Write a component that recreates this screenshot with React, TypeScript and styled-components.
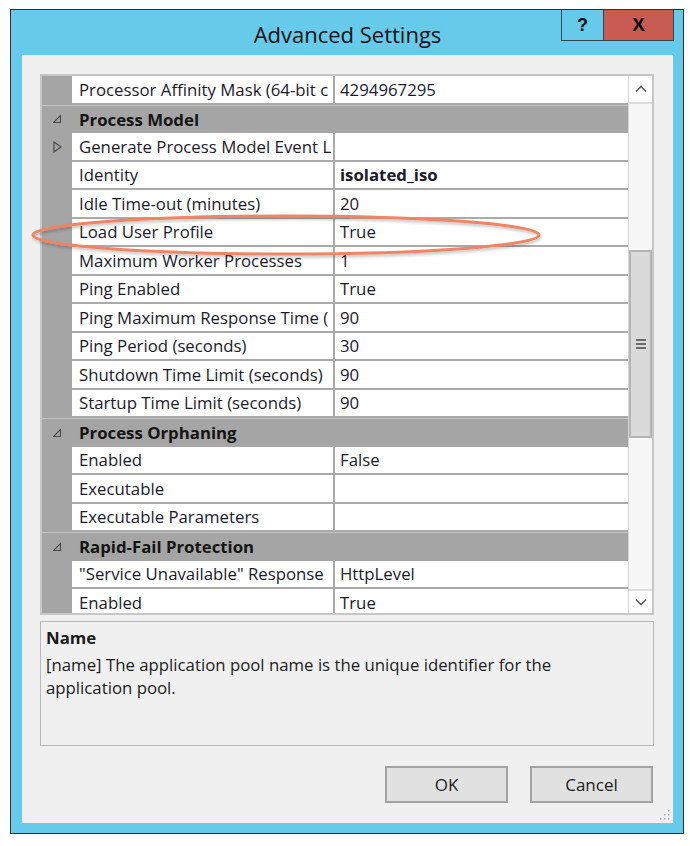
import styled, { createGlobalStyle } from 'styled-components';

const GlobalStyle = createGlobalStyle`
  html, body {
    margin: 0;
    padding: 0;
    background: #ffffff;
  }
  * {
    box-sizing: border-box;
  }
`;

const UI_FONT = `'Open Sans', 'Noto Sans', 'Liberation Sans', sans-serif`;

type PropRow = {
  kind: 'prop';
  name: string;
  value: string;
  bold?: boolean;
  expandable?: boolean;
};
type GroupRow = { kind: 'group'; name: string };
type Row = PropRow | GroupRow;

// names are cut where the grid column cuts them in the dialog
const rows: Row[] = [
  { kind: 'prop', name: 'Processor Affinity Mask (64-bit c', value: '4294967295' },
  { kind: 'group', name: 'Process Model' },
  { kind: 'prop', name: 'Generate Process Model Event L', value: '', expandable: true },
  { kind: 'prop', name: 'Identity', value: 'isolated_iso', bold: true },
  { kind: 'prop', name: 'Idle Time-out (minutes)', value: '20' },
  { kind: 'prop', name: 'Load User Profile', value: 'True' },
  { kind: 'prop', name: 'Maximum Worker Processes', value: '1' },
  { kind: 'prop', name: 'Ping Enabled', value: 'True' },
  { kind: 'prop', name: 'Ping Maximum Response Time (', value: '90' },
  { kind: 'prop', name: 'Ping Period (seconds)', value: '30' },
  { kind: 'prop', name: 'Shutdown Time Limit (seconds)', value: '90' },
  { kind: 'prop', name: 'Startup Time Limit (seconds)', value: '90' },
  { kind: 'group', name: 'Process Orphaning' },
  { kind: 'prop', name: 'Enabled', value: 'False' },
  { kind: 'prop', name: 'Executable', value: '' },
  { kind: 'prop', name: 'Executable Parameters', value: '' },
  { kind: 'group', name: 'Rapid-Fail Protection' },
  { kind: 'prop', name: '"Service Unavailable" Response ', value: 'HttpLevel' },
  { kind: 'prop', name: 'Enabled', value: 'True' },
];

const Window = styled.div`
  position: relative;
  margin: 9px 0 0 10px;
  width: 674px;
  height: 825px;
  border: 1px solid #2e2e2e;
  background: #66cbea;
  padding: 0 10px 10px 11px;
  display: flex;
  flex-direction: column;
  font-family: ${UI_FONT};
  color: #1b1b1b;
`;

const TitleBar = styled.div`
  height: 45px;
  display: grid;
  grid-template-columns: 1fr auto 1fr;
  align-items: start;
`;

const Title = styled.div`
  grid-column: 2;
  padding-top: 10px;
  font-size: 22px;
  line-height: 28px;
  color: #111;
`;

const CaptionButtons = styled.div`
  grid-column: 3;
  justify-self: end;
  margin-right: -1px;
  display: flex;
  border: 1px solid #34464e;
  border-top: none;
`;

const CaptionButton = styled.div<{ $close?: boolean }>`
  width: ${p => (p.$close ? '70px' : '41px')};
  height: 30px;
  display: flex;
  align-items: center;
  justify-content: center;
  background: ${p => (p.$close ? '#c75b52' : 'transparent')};
  border-left: ${p => (p.$close ? '1px solid #34464e' : 'none')};
  font-family: 'Liberation Sans', Arial, sans-serif;
  font-weight: 700;
  font-size: ${p => (p.$close ? '19px' : '18px')};
  color: #0a0a0a;
`;

const Client = styled.div`
  position: relative;
  flex: 1;
  background: #f0f0f0;
  padding: 19px 19px 20px 18px;
  display: flex;
  flex-direction: column;
`;

const Grid = styled.div`
  height: 541px;
  border: 2px solid #c6c6c6;
  display: flex;
  background: #ffffff;
  overflow: hidden;
`;

const Table = styled.div`
  flex: 1;
  display: flex;
  flex-direction: column;
  overflow: hidden;
  font-size: 16.8px;
`;

const RowBox = styled.div<{ $group?: boolean }>`
  flex: 0 0 28.5px;
  height: 28.5px;
  display: grid;
  grid-template-columns: 30px 263px 1fr;
  background: ${p => (p.$group ? '#a5a5a5' : '#ffffff')};
  border-top: ${p => (p.$group ? '1px solid #c2c2c2' : 'none')};
`;

const Gutter = styled.div`
  background: #a5a5a5;
  display: flex;
  align-items: center;
  justify-content: center;
  padding-left: 1px;
`;

const Cell = styled.div<{ $name?: boolean; $bold?: boolean }>`
  display: flex;
  align-items: center;
  white-space: nowrap;
  overflow: hidden;
  padding-left: ${p => (p.$name ? '7px' : '5px')};
  border-bottom: 2px solid #a9a9a9;
  border-right: ${p => (p.$name ? '2px solid #a9a9a9' : 'none')};
  font-weight: ${p => (p.$bold ? 700 : 400)};
  color: #1c1a2a;
`;

const GroupLabel = styled.div`
  grid-column: 2 / 4;
  display: flex;
  align-items: center;
  padding-left: 7px;
  font-weight: 700;
  color: #141414;
`;

const ScrollBar = styled.div`
  width: 24px;
  display: flex;
  flex-direction: column;
  background: #f7f7f7;
  border-left: 1px solid #d6d6d6;
`;

const ArrowButton = styled.div<{ $h: number; $down?: boolean }>`
  height: ${p => p.$h}px;
  flex: 0 0 ${p => p.$h}px;
  background: #ffffff;
  display: flex;
  align-items: center;
  justify-content: center;
  border-bottom: ${p => (p.$down ? 'none' : '2px solid #dcdcdc')};
  border-top: ${p => (p.$down ? '2px solid #dcdcdc' : 'none')};
`;

const Track = styled.div`
  flex: 1;
  padding-top: 146px;
`;

const Thumb = styled.div`
  height: 188px;
  background: #dadada;
  border: 2px solid #b4b4b4;
  display: flex;
  flex-direction: column;
  align-items: center;
  justify-content: center;
  gap: 2px;
`;

const GripLine = styled.div`
  width: 10px;
  height: 2px;
  background: #6a6a6a;
`;

const Description = styled.div`
  margin-top: 6px;
  height: 125px;
  border: 1px solid #b8b8b8;
  padding: 4px 40px 0 5px;
  font-size: 16.8px;
  line-height: 23px;
`;

const DescTitle = styled.div`
  font-weight: 700;
  margin-bottom: 4px;
`;

const ButtonRow = styled.div`
  margin-top: 20px;
  display: flex;
  justify-content: flex-end;
  gap: 22px;
  padding-right: 1px;
`;

const DialogButton = styled.div`
  width: 123px;
  height: 37px;
  display: flex;
  align-items: center;
  justify-content: center;
  background: #e1e1e1;
  border: 2px solid #a3a3a3;
  font-size: 17px;
  color: #1b1b1b;
`;

const Grip = styled.svg`
  position: absolute;
  right: 3px;
  bottom: 3px;
`;

const Highlight = styled.svg`
  position: absolute;
  left: 17px;
  top: 201px;
  overflow: visible;
  pointer-events: none;
`;

function ExpandedGlyph() {
  return (
    <svg width="9" height="10" viewBox="0 0 9 10">
      <path d="M7.5 1.5 L7.5 8.5 L0.5 8.5 Z" fill="none" stroke="#4a4a4a" strokeWidth="1.1" />
    </svg>
  );
}

function CollapsedGlyph() {
  return (
    <svg width="9" height="12" viewBox="0 0 9 12">
      <path d="M1 1 L8 6 L1 11 Z" fill="none" stroke="#4a4a4a" strokeWidth="1.2" />
    </svg>
  );
}

function Chevron({ down }: { down?: boolean }) {
  return (
    <svg width="12" height="8" viewBox="0 0 12 8">
      <polyline
        points={down ? '1,1.5 6,6.5 11,1.5' : '1,6.5 6,1.5 11,6.5'}
        fill="none"
        stroke="#606060"
        strokeWidth="1.6"
      />
    </svg>
  );
}

export default function App() {
  return (
    <>
      <GlobalStyle />
      <Window>
        <TitleBar>
          <Title>Advanced Settings</Title>
          <CaptionButtons>
            <CaptionButton>?</CaptionButton>
            <CaptionButton $close>X</CaptionButton>
          </CaptionButtons>
        </TitleBar>

        <Client>
          <Grid>
            <Table>
              {rows.map((row, i) =>
                row.kind === 'group' ? (
                  <RowBox key={i} $group>
                    <Gutter>
                      <ExpandedGlyph />
                    </Gutter>
                    <GroupLabel>{row.name}</GroupLabel>
                  </RowBox>
                ) : (
                  <RowBox key={i}>
                    <Gutter>{row.expandable && <CollapsedGlyph />}</Gutter>
                    <Cell $name>{row.name}</Cell>
                    <Cell $bold={row.bold}>{row.value}</Cell>
                  </RowBox>
                )
              )}
            </Table>
            <ScrollBar>
              <ArrowButton $h={28}>
                <Chevron />
              </ArrowButton>
              <Track>
                <Thumb>
                  <GripLine />
                  <GripLine />
                  <GripLine />
                </Thumb>
              </Track>
              <ArrowButton $h={24} $down>
                <Chevron down />
              </ArrowButton>
            </ScrollBar>
          </Grid>

          <Description>
            <DescTitle>Name</DescTitle>
            [name] The application pool name is the unique identifier for the application pool.
          </Description>

          <ButtonRow>
            <DialogButton>OK</DialogButton>
            <DialogButton>Cancel</DialogButton>
          </ButtonRow>

          <Grip width="12" height="12" viewBox="0 0 12 12">
            {[
              [10, 2],
              [10, 6],
              [6, 6],
              [10, 10],
              [6, 10],
              [2, 10],
            ].map(([x, y], i) => (
              <rect key={i} x={x} y={y} width="1.5" height="1.5" fill="#b0b0b0" />
            ))}
          </Grip>
        </Client>

        <Highlight width="520" height="50" viewBox="0 0 520 50">
          <defs>
            <filter id="soft" x="-5%" y="-40%" width="110%" height="180%">
              <feDropShadow dx="1" dy="2" stdDeviation="1.5" floodColor="#000" floodOpacity="0.25" />
            </filter>
          </defs>
          <ellipse
            cx="258"
            cy="24"
            rx="253"
            ry="19"
            fill="none"
            stroke="#ef8562"
            strokeWidth="3"
            filter="url(#soft)"
          />
        </Highlight>
      </Window>
    </>
  );
}
